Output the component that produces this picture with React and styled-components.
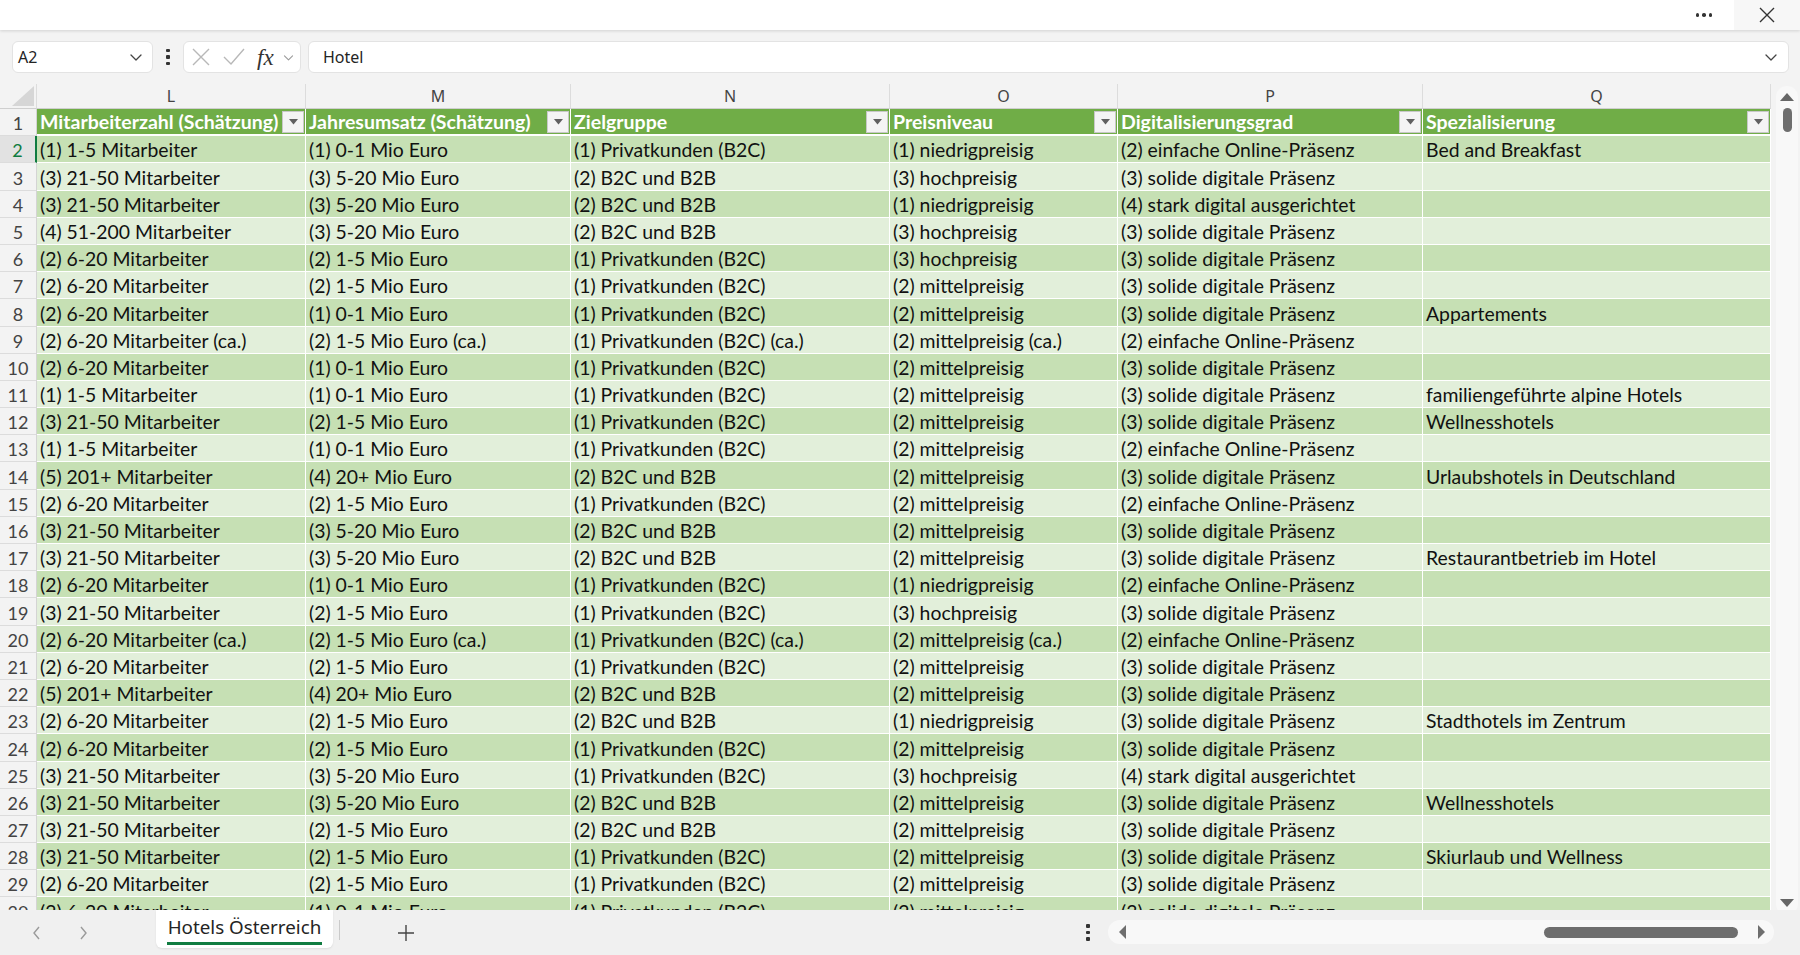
import styled, { createGlobalStyle } from "styled-components";

const GlobalStyle = createGlobalStyle`
  html, body {
    margin: 0;
    padding: 0;
  }
  body {
    background: #f3f3f3;
    font-family: "Noto Sans", "Open Sans", sans-serif;
    overflow: hidden;
  }
`;

const columns = [
  { letter: "L", title: "Mitarbeiterzahl (Schätzung)", width: 269 },
  { letter: "M", title: "Jahresumsatz (Schätzung)", width: 265 },
  { letter: "N", title: "Zielgruppe", width: 319 },
  { letter: "O", title: "Preisniveau", width: 228 },
  { letter: "P", title: "Digitalisierungsgrad", width: 305 },
  { letter: "Q", title: "Spezialisierung", width: 348 },
];

const MA = {
  1: "(1) 1-5 Mitarbeiter",
  2: "(2) 6-20 Mitarbeiter",
  3: "(3) 21-50 Mitarbeiter",
  4: "(4) 51-200 Mitarbeiter",
  5: "(5) 201+ Mitarbeiter",
};
const UMS = {
  1: "(1) 0-1 Mio Euro",
  2: "(2) 1-5 Mio Euro",
  3: "(3) 5-20 Mio Euro",
  4: "(4) 20+ Mio Euro",
};
const ZG = { 1: "(1) Privatkunden (B2C)", 2: "(2) B2C und B2B" };
const PN = { 1: "(1) niedrigpreisig", 2: "(2) mittelpreisig", 3: "(3) hochpreisig" };
const DG = {
  2: "(2) einfache Online-Präsenz",
  3: "(3) solide digitale Präsenz",
  4: "(4) stark digital ausgerichtet",
};

// [mitarbeiter, umsatz, zielgruppe, preis, digital, spezialisierung, ca.]
const raw = [
  [1, 1, 1, 1, 2, "Bed and Breakfast"],
  [3, 3, 2, 3, 3, ""],
  [3, 3, 2, 1, 4, ""],
  [4, 3, 2, 3, 3, ""],
  [2, 2, 1, 3, 3, ""],
  [2, 2, 1, 2, 3, ""],
  [2, 1, 1, 2, 3, "Appartements"],
  [2, 2, 1, 2, 2, "", true],
  [2, 1, 1, 2, 3, ""],
  [1, 1, 1, 2, 3, "familiengeführte alpine Hotels"],
  [3, 2, 1, 2, 3, "Wellnesshotels"],
  [1, 1, 1, 2, 2, ""],
  [5, 4, 2, 2, 3, "Urlaubshotels in Deutschland"],
  [2, 2, 1, 2, 2, ""],
  [3, 3, 2, 2, 3, ""],
  [3, 3, 2, 2, 3, "Restaurantbetrieb im Hotel"],
  [2, 1, 1, 1, 2, ""],
  [3, 2, 1, 3, 3, ""],
  [2, 2, 1, 2, 2, "", true],
  [2, 2, 1, 2, 3, ""],
  [5, 4, 2, 2, 3, ""],
  [2, 2, 2, 1, 3, "Stadthotels im Zentrum"],
  [2, 2, 1, 2, 3, ""],
  [3, 3, 1, 3, 4, ""],
  [3, 3, 2, 2, 3, "Wellnesshotels"],
  [3, 2, 2, 2, 3, ""],
  [3, 2, 1, 2, 3, "Skiurlaub und Wellness"],
  [2, 2, 1, 2, 3, ""],
  [2, 1, 1, 2, 3, ""],
];

const rows = raw.map(([m, u, z, p, d, s, ca]) => {
  const tag = ca ? " (ca.)" : "";
  return [MA[m] + tag, UMS[u] + tag, ZG[z] + tag, PN[p] + tag, DG[d], s];
});

const gridTemplate = `37px ${columns.map(c => c.width + "px").join(" ")}`;

const Chevron = ({ size = 14, color = "#444" }) => (
  <svg width={size} height={size} viewBox="0 0 16 16" fill="none">
    <path d="M3 6l5 5 5-5" stroke={color} strokeWidth="1.3" strokeLinecap="round" strokeLinejoin="round" />
  </svg>
);

const App = () => {
  return (
    <Window>
      <GlobalStyle />
      <TitleBar>
        <MoreDots>
          <i />
          <i />
          <i />
        </MoreDots>
        <CloseButton>
          <svg width="18" height="18" viewBox="0 0 18 18">
            <path d="M2 2l14 14M16 2L2 16" stroke="#333" strokeWidth="1.4" />
          </svg>
        </CloseButton>
      </TitleBar>

      <FormulaBar>
        <NameBox>
          <span>A2</span>
          <Chevron size={16} />
        </NameBox>
        <VDots>
          <i />
          <i />
          <i />
        </VDots>
        <FxBox>
          <svg width="20" height="20" viewBox="0 0 20 20">
            <path d="M2 2l16 16M18 2L2 18" stroke="#b8b8b8" strokeWidth="1.4" />
          </svg>
          <svg width="24" height="20" viewBox="0 0 24 20">
            <path d="M2 10l7 7L22 2" stroke="#b8b8b8" strokeWidth="1.4" fill="none" />
          </svg>
          <FxLabel>fx</FxLabel>
          <Chevron size={13} color="#999" />
        </FxBox>
        <FormulaInput>
          <span>Hotel</span>
          <Chevron size={16} />
        </FormulaInput>
      </FormulaBar>

      <SheetArea>
        <Sheet>
          <Corner>
            <svg width="22" height="20" viewBox="0 0 22 20">
              <path d="M22 0L22 20L0 20Z" fill="#d6d6d6" />
            </svg>
          </Corner>
          {columns.map(c => (
            <ColLetter key={c.letter}>{c.letter}</ColLetter>
          ))}

          <RowNum>1</RowNum>
          {columns.map(c => (
            <HeadCell key={c.title}>
              <span>{c.title}</span>
              <FilterButton>
                <svg width="9" height="6" viewBox="0 0 9 6">
                  <path d="M0 0h9L4.5 5.5z" fill="#606060" />
                </svg>
              </FilterButton>
            </HeadCell>
          ))}

          {rows.map((r, i) => (
            <RowFragment key={i} num={i + 2} cells={r} dark={i % 2 === 0} />
          ))}
        </Sheet>

        <VScroll>
          <ArrowUp />
          <VThumb />
          <Spacer />
          <ArrowDown />
        </VScroll>
      </SheetArea>

      <TabBar>
        <NavArrows>
          <svg width="12" height="16" viewBox="0 0 12 16">
            <path d="M8 2L3 8l5 6" stroke="#9a9a9a" strokeWidth="1.4" fill="none" />
          </svg>
          <svg width="12" height="16" viewBox="0 0 12 16">
            <path d="M4 2l5 6-5 6" stroke="#9a9a9a" strokeWidth="1.4" fill="none" />
          </svg>
        </NavArrows>
        <SheetTab>
          <TabLabel>Hotels Österreich</TabLabel>
        </SheetTab>
        <TabDivider />
        <AddSheet>
          <svg width="18" height="18" viewBox="0 0 18 18">
            <path d="M9 1v16M1 9h16" stroke="#444" strokeWidth="1.4" />
          </svg>
        </AddSheet>
        <Spacer />
        <BarDots>
          <i />
          <i />
          <i />
        </BarDots>
        <HScroll>
          <svg width="8" height="14" viewBox="0 0 8 14">
            <path d="M8 0v14L1 7z" fill="#6e6e6e" />
          </svg>
          <Spacer />
          <HThumb />
          <svg width="8" height="14" viewBox="0 0 8 14">
            <path d="M0 0v14l7-7z" fill="#6e6e6e" />
          </svg>
        </HScroll>
      </TabBar>
    </Window>
  );
};

const RowFragment = ({ num, cells, dark }) => (
  <>
    <RowNum $selected={num === 2}>{num}</RowNum>
    {cells.map((text, j) => (
      <Cell key={j} $dark={dark}>
        {text}
      </Cell>
    ))}
  </>
);

export default App;

// Fenster
const Window = styled.div`
  width: 1800px;
  height: 955px;
  display: flex;
  flex-direction: column;
  background: #f3f3f3;
  overflow: hidden;
`;

// obere Leiste
const TitleBar = styled.div`
  height: 30px;
  flex-shrink: 0;
  background: #ffffff;
  box-shadow: 0 1px 3px rgba(0, 0, 0, 0.14);
  display: flex;
  justify-content: flex-end;
  align-items: stretch;
  position: relative;
  z-index: 2;
`;

const MoreDots = styled.div`
  width: 60px;
  display: flex;
  align-items: center;
  justify-content: center;
  gap: 3px;
  i {
    width: 3.5px;
    height: 3.5px;
    border-radius: 50%;
    background: #333;
  }
`;

const CloseButton = styled.div`
  width: 66px;
  background: #f7f7f7;
  display: flex;
  align-items: center;
  justify-content: center;
`;

// Bearbeitungsleiste
const FormulaBar = styled.div`
  height: 54px;
  flex-shrink: 0;
  box-sizing: border-box;
  padding: 11px 11px 11px 12px;
  display: flex;
  align-items: stretch;
`;

const Field = styled.div`
  background: #ffffff;
  border: 1px solid #e3e3e3;
  border-radius: 6px;
  box-sizing: border-box;
  display: flex;
  align-items: center;
  font-size: 16px;
  color: #242424;
`;

const NameBox = styled(Field)`
  width: 141px;
  padding: 0 8px 0 5px;
  justify-content: space-between;
`;

const VDots = styled.div`
  width: 30px;
  display: flex;
  flex-direction: column;
  align-items: center;
  justify-content: center;
  gap: 3px;
  i {
    width: 3.5px;
    height: 3.5px;
    background: #333;
    border-radius: 1px;
  }
`;

const BarDots = styled(VDots)`
  width: 24px;
  margin-right: 8px;
`;

const FxBox = styled(Field)`
  width: 118px;
  padding: 0 3px 0 7px;
  gap: 11px;
`;

const FxLabel = styled.span`
  font-family: "Liberation Serif", serif;
  font-style: italic;
  font-size: 23px;
  color: #333;
  line-height: 1;
  margin-right: -3px;
`;

const FormulaInput = styled(Field)`
  flex: 1;
  margin-left: 7px;
  padding: 0 9px 0 14px;
  justify-content: space-between;
`;

// Tabelle
const SheetArea = styled.div`
  flex: 1;
  display: flex;
  min-height: 0;
`;

const Sheet = styled.div`
  width: 1771px;
  flex-shrink: 0;
  display: grid;
  grid-template-columns: ${gridTemplate};
  grid-template-rows: 25px;
  grid-auto-rows: 27.2px;
  overflow: hidden;
  align-content: start;
  font-family: "Lato", "Liberation Sans", sans-serif;
`;

const Corner = styled.div`
  background: #f3f3f3;
  display: flex;
  align-items: flex-end;
  justify-content: flex-end;
  padding: 0 2px 2px 0;
  border-right: 1px solid #dcdcdc;
  border-bottom: 1px solid #cfcfcf;
  box-sizing: border-box;
`;

const ColLetter = styled.div`
  background: #f3f3f3;
  color: #444;
  font-family: "Noto Sans", sans-serif;
  font-size: 16px;
  display: flex;
  align-items: center;
  justify-content: center;
  border-right: 1px solid #dcdcdc;
  border-bottom: 1px solid #cfcfcf;
  box-sizing: border-box;
`;

const RowNum = styled.div`
  background: ${p => (p.$selected ? "#e2e2e2" : "#f3f3f3")};
  color: ${p => (p.$selected ? "#107c41" : "#444")};
  font-size: 18px;
  display: flex;
  align-items: flex-end;
  justify-content: center;
  padding-bottom: 1px;
  box-sizing: border-box;
  border-bottom: 1px solid #dcdcdc;
  border-right: ${p => (p.$selected ? "2px solid #107c41" : "1px solid #d4d4d4")};
`;

const HeadCell = styled.div`
  background: #70ad47;
  color: #ffffff;
  font-weight: 700;
  font-size: 19.5px;
  display: flex;
  align-items: center;
  justify-content: space-between;
  padding: 0 1px 0 3px;
  box-sizing: border-box;
  border-right: 1px solid #ffffff;
  border-bottom: 2px solid #ffffff;
  white-space: nowrap;
  overflow: hidden;
`;

const FilterButton = styled.div`
  width: 22px;
  height: 22px;
  flex-shrink: 0;
  box-sizing: border-box;
  background: #f4f4f4;
  border: 1px solid #c8c8c8;
  display: flex;
  align-items: center;
  justify-content: center;
`;

const Cell = styled.div`
  background: ${p => (p.$dark ? "#c6e0b4" : "#e2efda")};
  color: #111;
  font-size: 19.4px;
  display: flex;
  align-items: flex-end;
  padding: 0 3px 1px;
  box-sizing: border-box;
  border-right: 1px solid #ffffff;
  border-bottom: 1px solid #ffffff;
  white-space: nowrap;
  overflow: hidden;
`;

// Bildlaufleisten
const VScroll = styled.div`
  width: 22px;
  margin: 2px 2px 0 5px;
  height: 829px;
  background: #f8f8f8;
  border-radius: 11px;
  display: flex;
  flex-direction: column;
  align-items: center;
  padding: 7px 0 8px;
  box-sizing: border-box;
`;

const ArrowUp = styled.div`
  width: 0;
  height: 0;
  border-left: 7px solid transparent;
  border-right: 7px solid transparent;
  border-bottom: 8px solid #666;
`;

const ArrowDown = styled.div`
  width: 0;
  height: 0;
  border-left: 7px solid transparent;
  border-right: 7px solid transparent;
  border-top: 8px solid #666;
`;

const VThumb = styled.div`
  width: 9px;
  height: 24px;
  margin-top: 7px;
  background: #6e6e6e;
  border-radius: 5px;
`;

const Spacer = styled.div`
  flex: 1;
`;

// Registerleiste
const TabBar = styled.div`
  height: 45px;
  flex-shrink: 0;
  display: flex;
  align-items: stretch;
  background: #f0f0f0;
  padding-right: 26px;
`;

const NavArrows = styled.div`
  width: 156px;
  display: flex;
  align-items: center;
  padding-left: 31px;
  gap: 34px;
  box-sizing: border-box;
`;

const SheetTab = styled.div`
  width: 177px;
  height: 38px;
  background: #ffffff;
  border-radius: 0 0 6px 6px;
  box-shadow: 0 1px 2px rgba(0, 0, 0, 0.08);
  display: flex;
  justify-content: center;
  align-items: flex-start;
`;

const TabLabel = styled.div`
  margin-top: 5px;
  font-size: 18.8px;
  color: #242424;
  padding: 0 1px 3px;
  border-bottom: 3px solid #107c41;
  line-height: 24px;
`;

const TabDivider = styled.div`
  width: 1px;
  height: 20px;
  background: #cacaca;
  margin: 10px 0 0 6px;
`;

const AddSheet = styled.div`
  width: 132px;
  display: flex;
  align-items: center;
  justify-content: center;
`;

const HScroll = styled.div`
  width: 666px;
  height: 24px;
  margin-top: 10px;
  background: #f8f8f8;
  border-radius: 12px;
  display: flex;
  align-items: center;
  padding: 0 8px 0 10px;
  box-sizing: border-box;
  gap: 10px;
`;

const HThumb = styled.div`
  width: 194px;
  height: 11px;
  margin-right: 10px;
  background: #6e6e6e;
  border-radius: 6px;
`;
